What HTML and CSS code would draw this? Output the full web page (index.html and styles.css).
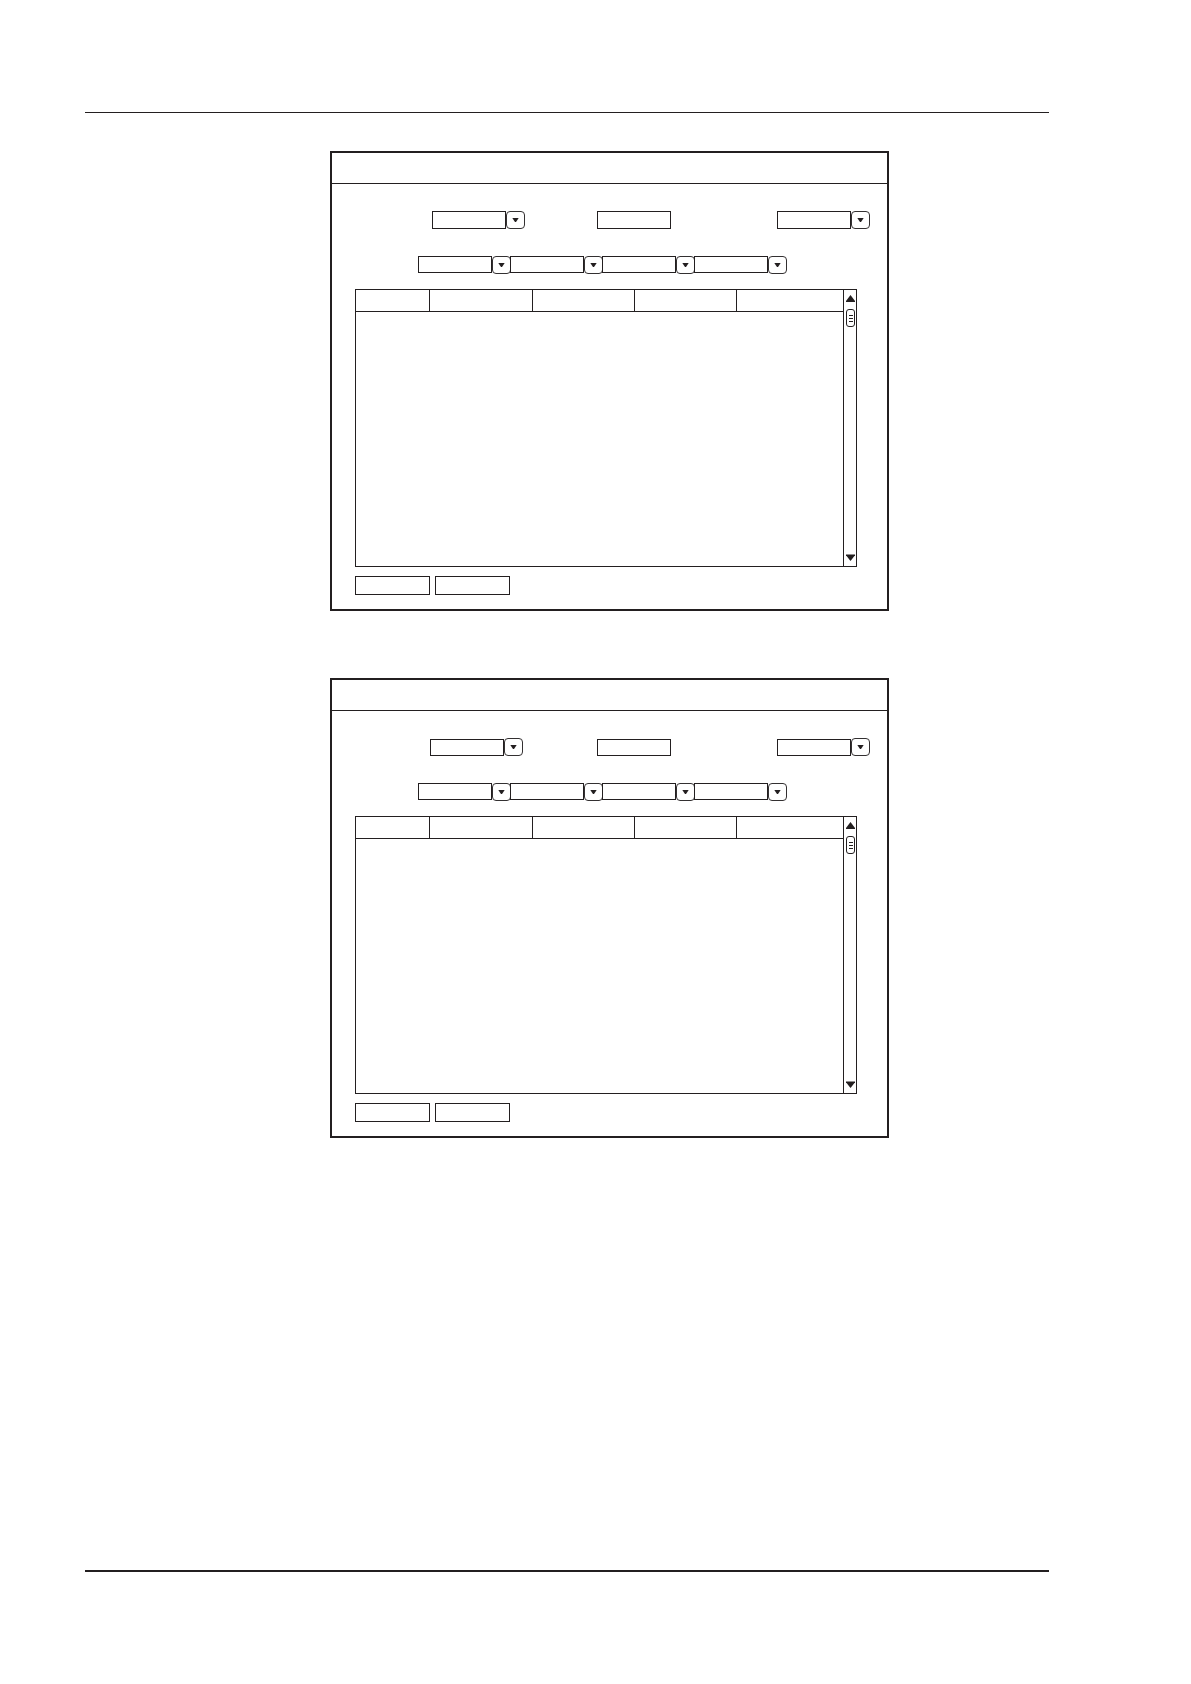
FILE: index.html
```html
<!DOCTYPE html>
<html lang="en">
<head>
<meta charset="utf-8">
<meta name="viewport" content="width=device-width, initial-scale=1">
<title>Log search</title>
<link rel="stylesheet" href="styles.css">
</head>
<body>
<svg class="sprite" aria-hidden="true">
  <symbol id="drop" viewBox="0 0 7 6"><path d="M0.3 1H6.7L4 5H3Z"/></symbol>
  <symbol id="up" viewBox="0 0 9 7"><path d="M4.5 0L9 6V7H0V6Z"/></symbol>
  <symbol id="down" viewBox="0 0 9 7"><path d="M0 0.5H9V1.2L4.5 7L0 1.2Z"/></symbol>
</svg>
<div class="page">
  <main class="content">
    <section class="window">
      <header class="titlebar"></header>
      <form class="body">
        <div class="filters">
          <div class="combo"><span class="face"></span><span class="arrow"><svg class="drop"><use href="#drop"/></svg></span><select aria-label="Type"><option></option></select></div>
          <input class="field" type="text" aria-label="Name">
          <div class="combo"><span class="face"></span><span class="arrow"><svg class="drop"><use href="#drop"/></svg></span><select aria-label="Status"><option></option></select></div>
        </div>
        <div class="period">
          <div class="combo short"><span class="face"></span><span class="arrow"><svg class="drop"><use href="#drop"/></svg></span><select aria-label="Start date"><option></option></select></div>
          <div class="combo short"><span class="face"></span><span class="arrow"><svg class="drop"><use href="#drop"/></svg></span><select aria-label="Start time"><option></option></select></div>
          <div class="combo short"><span class="face"></span><span class="arrow"><svg class="drop"><use href="#drop"/></svg></span><select aria-label="End date"><option></option></select></div>
          <div class="combo short"><span class="face"></span><span class="arrow"><svg class="drop"><use href="#drop"/></svg></span><select aria-label="End time"><option></option></select></div>
        </div>
        <div class="list">
          <table class="grid" aria-label="Results">
            <colgroup><col class="c1"><col class="c2"><col class="c3"><col class="c4"><col></colgroup>
            <thead><tr><th></th><th></th><th></th><th></th><th></th></tr></thead>
            <tbody><tr><td colspan="5"></td></tr></tbody>
          </table>
          <div class="scrollbar">
            <button class="step" type="button" aria-label="Scroll up"><svg><use href="#up"/></svg></button>
            <span class="thumb"><i></i><i></i><i></i></span>
            <button class="step last" type="button" aria-label="Scroll down"><svg><use href="#down"/></svg></button>
          </div>
        </div>
        <div class="actions">
          <button class="action" type="button" aria-label="Search"></button>
          <button class="action" type="button" aria-label="Close"></button>
        </div>
      </form>
    </section>

    <section class="window">
      <header class="titlebar"></header>
      <form class="body">
        <div class="filters alt">
          <div class="combo low"><span class="face"></span><span class="arrow"><svg class="drop"><use href="#drop"/></svg></span><select aria-label="Type"><option></option></select></div>
          <input class="field" type="text" aria-label="Name">
          <div class="combo low"><span class="face"></span><span class="arrow"><svg class="drop"><use href="#drop"/></svg></span><select aria-label="Status"><option></option></select></div>
        </div>
        <div class="period">
          <div class="combo short"><span class="face"></span><span class="arrow"><svg class="drop"><use href="#drop"/></svg></span><select aria-label="Start date"><option></option></select></div>
          <div class="combo short"><span class="face"></span><span class="arrow"><svg class="drop"><use href="#drop"/></svg></span><select aria-label="Start time"><option></option></select></div>
          <div class="combo short"><span class="face"></span><span class="arrow"><svg class="drop"><use href="#drop"/></svg></span><select aria-label="End date"><option></option></select></div>
          <div class="combo short"><span class="face"></span><span class="arrow"><svg class="drop"><use href="#drop"/></svg></span><select aria-label="End time"><option></option></select></div>
        </div>
        <div class="list">
          <table class="grid" aria-label="Results">
            <colgroup><col class="c1"><col class="c2"><col class="c3"><col class="c4"><col></colgroup>
            <thead><tr><th></th><th></th><th></th><th></th><th></th></tr></thead>
            <tbody><tr><td colspan="5"></td></tr></tbody>
          </table>
          <div class="scrollbar">
            <button class="step" type="button" aria-label="Scroll up"><svg><use href="#up"/></svg></button>
            <span class="thumb"><i></i><i></i><i></i></span>
            <button class="step last" type="button" aria-label="Scroll down"><svg><use href="#down"/></svg></button>
          </div>
        </div>
        <div class="actions">
          <button class="action" type="button" aria-label="Search"></button>
          <button class="action" type="button" aria-label="Close"></button>
        </div>
      </form>
    </section>
  </main>
</div>
</body>
</html>
```
FILE: styles.css
```css
:root {
  --ink: #231f20;
}

* {
  box-sizing: border-box;
}

body {
  margin: 0;
  background: #fff;
  color: var(--ink);
  font: 12px "Liberation Sans", Arial, sans-serif;
}

.sprite {
  display: none;
}

svg {
  display: block;
  fill: var(--ink);
}

.page {
  display: flex;
  min-height: 100vh;
  padding: 112px 142px 112px 85px;
}

.content {
  flex: 1;
  display: flex;
  flex-direction: column;
  gap: 67px;
  padding: 38px 160px 38px 245px;
  border-top: 1px solid var(--ink);
  border-bottom: 2px solid var(--ink);
}

.window {
  border: 2px solid var(--ink);
}

.titlebar {
  height: 31px;
  border-bottom: 1px solid var(--ink);
}

.body {
  padding: 27px 0 14px;
}

/* Filter rows */
.filters {
  display: grid;
  grid-template-columns: 165fr 180fr 93px;
  align-items: end;
  padding: 0 17px 0 100px;
}

.filters.alt {
  grid-template-columns: 167fr 180fr 93px;
  padding-left: 98px;
}

.field,
.face {
  width: 74px;
  height: 18px;
  margin: 0;
  padding: 0 4px;
  border: 1px solid var(--ink);
  border-radius: 0;
  background: #fff;
  font: inherit;
}

.alt .field,
.low .face,
.short .face {
  height: 17px;
}

.combo {
  display: grid;
  grid-template-columns: 74px 19px;
  align-items: start;
}

.low {
  align-items: end;
}

.face {
  grid-area: 1 / 1;
}

.arrow {
  grid-area: 1 / 2;
  display: flex;
  align-items: center;
  justify-content: center;
  height: 18px;
  border: 1px solid #333031;
  border-radius: 4px;
  background: #fff;
}

.drop {
  width: 7px;
  height: 6px;
}

.combo select {
  grid-area: 1 / 1 / 2 / 3;
  width: 93px;
  height: 18px;
  padding: 0 23px 0 4px;
  border: 0;
  background: transparent;
  appearance: none;
  font: inherit;
}

.period {
  display: flex;
  margin-top: 27px;
  padding-left: 86px;
}

.period .combo {
  margin-right: -1px;
}

/* Result list */
.list {
  display: flex;
  margin: 15px 30px 0 23px;
  border: 1px solid var(--ink);
}

.grid {
  flex: 1;
  table-layout: fixed;
  border-spacing: 0;
}

.grid .c1 {
  width: 74px;
}

.grid .c2 {
  width: 103px;
}

.grid .c3,
.grid .c4 {
  width: 102px;
}

.grid th {
  height: 22px;
  padding: 0;
  border-right: 1px solid var(--ink);
  border-bottom: 1px solid var(--ink);
}

.grid th:last-child {
  border-right: 0;
}

.grid td {
  height: 254px;
  padding: 0;
}

.scrollbar {
  display: flex;
  flex-direction: column;
  align-items: flex-start;
  width: 13px;
  padding: 5px 0 5px 2px;
  border-left: 1px solid var(--ink);
}

.step {
  padding: 0;
  border: 0;
  background: none;
}

.step svg {
  width: 9px;
  height: 7px;
}

.last {
  margin-top: auto;
}

.thumb {
  display: flex;
  flex-direction: column;
  align-items: center;
  justify-content: center;
  gap: 2px;
  width: 9px;
  height: 18px;
  margin-top: 7px;
  border: 1px solid var(--ink);
  border-radius: 3px;
}

.thumb i {
  width: 4px;
  height: 1px;
  background: var(--ink);
}

/* Action buttons */
.actions {
  display: flex;
  gap: 5px;
  margin: 9px 0 0 23px;
}

.action {
  width: 75px;
  height: 19px;
  padding: 0;
  border: 1px solid var(--ink);
  border-radius: 0;
  background: #fff;
}
```
